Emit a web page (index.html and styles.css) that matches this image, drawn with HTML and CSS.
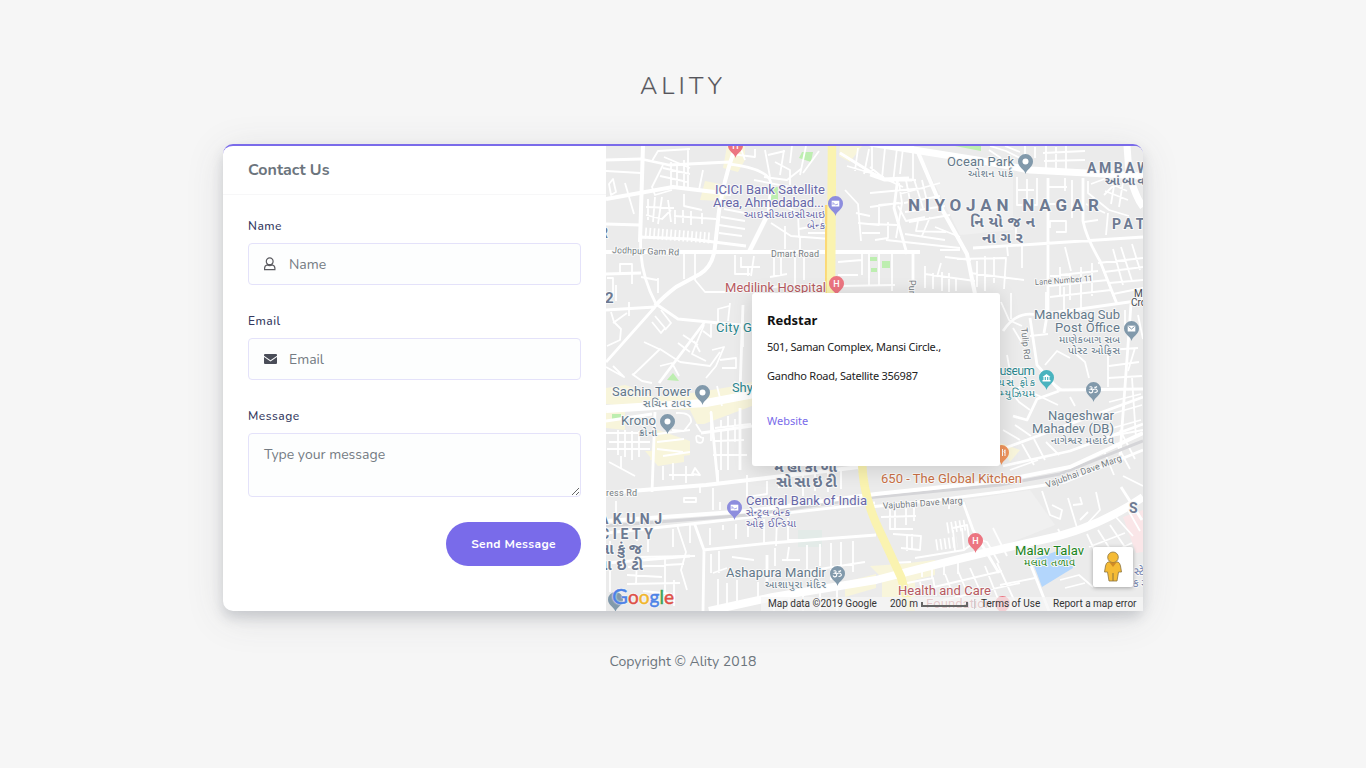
FILE: index.html
```html
<!DOCTYPE html>
<html lang="en">
<head>
<meta charset="utf-8">
<title>Ality - Contact</title>
<link rel="stylesheet" href="styles.css">
</head>
<body>
<main class="page">
  <h1 class="brand">ALITY</h1>
  <section class="card">
    <div class="form-col">
      <h2 class="card-title">Contact Us</h2>
      <form class="form">
        <label class="label" for="name">Name</label>
        <div class="field">
          <svg class="icon" viewBox="0 0 14 16"><path d="M6.700 1.900a3.400 3.400 0 1 0 0 6.800 3.400 3.400 0 0 0 0-6.800ZM4 9C2.400 9.400 1.600 10.600 1.600 12.200V13.700H11.900V12.200C11.900 10.600 11 9.400 9.400 9Q6.700 10.500 4 9Z" fill="none" stroke="#5b5b60" stroke-width="1.200"/></svg>
          <input class="input" id="name" placeholder="Name">
        </div>
        <label class="label" for="email">Email</label>
        <div class="field">
          <svg class="icon" viewBox="0 0 14 16"><path d="M2 3H13Q14 3 14 4V4.800L7.500 9.300L1 4.800V4Q1 3 2 3ZM1 6L7.500 10.500L14 6V12Q14 13 13 13H2Q1 13 1 12Z" fill="#4a4d58"/></svg>
          <input class="input" id="email" placeholder="Email">
        </div>
        <label class="label" for="message">Message</label>
        <textarea class="textarea" id="message" placeholder="Type your message"></textarea>
        <button class="send" type="button">Send Message</button>
      </form>
    </div>
    <div class="map">
      <svg class="map-art" viewBox="606 146 537 465">
        <defs>
          <g id="pin"><path d="M0 12C-1 7-7.500 5.500-7.500-.5A7.500 7.500 0 0 1 7.500-.5C7.500 5.500 1 7 0 12Z"/></g>
          <g id="om" fill="none" stroke="#fff" stroke-width="1.100"><path d="M-4-3Q-1-4-1.500-1.500L-3-.8Q0-.5-1 2-3 4-4.500 1.500M-1 0Q2-2 3.500 0T1 2.500M1-3Q2-2 3.500-3.500"/></g>
          <g id="mail"><rect x="-3.800" y="-3.300" width="7.600" height="5.800" fill="#fff"/></g>
        </defs>
        <rect x="606" y="146" width="537" height="465" fill="#ebebeb"/>
        <path fill="#f0f0f0" d="M918 150L990 166 1013 176V230L960 235ZM965 500L1030 490 1055 525 980 555Z"/>
        <g class="yellow-area">
          <path d="M727 146H745V160L738 172 723 168ZM705 181L730 186 724 201 700 200ZM840 146H862L850 162 839 156ZM606 388L625 385 640 390 655 397 700 392 735 386 752 382V406L704 424H697L690 410 640 408 606 404ZM655 429L690 441V455L650 460ZM606 412H625V430L606 428ZM645 451H684V462L658 466ZM870 566L900 564 935 560V575L915 580V597H882V578ZM845 582L876 574V588L845 597ZM1000 443L1020 450 1010 462Z"/>
        </g>
        <path fill="#bdeeb0" d="M802 152H813L811 162 799 158ZM771 187H778V200H771ZM667 380L673 373 679 381ZM612 414H621V420H612ZM870 257H877V261H870ZM882 261H890V268H882ZM871 268H877V272H871ZM955 146H981V151Z"/>
        <path fill="#fae6e8" d="M1123 517L1143 510V552L1136 553Z"/>
        <path fill="#e3ebe8" d="M798 530H822V547H798Z"/>

        <g class="road minor">
          <path d="M606 171L641 173M609 184L613 179 616 192 611 195ZM625 183L634 214M652 161L658 151 690 149M663 165L652 187 655 195 672 190M664 157L690 168M660 176L688 182M671 162V188M677 164V188M684 160V189M688 148V187M663 168L690 174M648 199V220M655 197L653 222M662 197L658 224M646 207L674 208M646 215L662 219 671 210M668 200L671 222M684 194V206L702 210M703 170L699 190M620 275V264H632V284M616 285V301M607 278H613V297M684 254V279M695 254V280L705 292H725M658 278V293M641 277L657 280M674 216L716 219M675 210V224M683 210V223M691 211V225M702 213V224"/>
          <path d="M731 154L755 157V149M741 149L745 160M765 150L770 177M768 155L785 151M724 209L750 214M721 217L745 221M719 225L745 229M719 233L742 236M764 177L787 180 801 169M775 162L790 170V185M784 150L780 175M792 146L790 163M806 146L800 175M819 151L803 173M754 180L790 187M779 203L798 213 799 238M771 223L791 236 830 239M785 226V249M799 229L821 225V218M800 237V250M808 233H830M774 258V277M770 277L787 274M781 258V276M795 254V285M754 256L751 276M804 256V280M735 255V274H750M741 257V267H760M748 268V276M758 290L780 286 831 285"/>
          <path d="M840 153L868 171 903 187M847 166L884 177M858 148L855 171M869 149L864 174M872 171L872 145M845 190L858 204 861 241M856 213L870 216M858 223L879 225V205L902 203M862 233H880M862 251V275M869 253V286M879 254V285M892 254V291M838 262L862 260M838 275L858 275M840 286L895 285M875 240L888 238V222M885 148L882 178M897 148L893 183M903 148L900 174M913 146V181M870 167L886 180H916M870 193L925 188M870 207L899 203M870 224L897 225M898 206L906 221 925 217M899 183L902 203 896 238M906 180L912 211M914 179L923 208M922 180L929 210M900 194L940 183M904 203L940 196M905 212L945 206M909 222L950 215M918 221L916 231 946 232M905 234L945 240M930 217L922 236M886 240L960 248M935 227L960 237M940 250H960M941 263L937 277M945 257L971 260M925 274L975 281M925 266V288M933 273V289M942 272V291M949 273V292M956 279V291"/>
          <path d="M990 146L1006 151 1020 158M989 150L1001 158M1005 146L1020 152M1025 146V157M1035 147V158M1046 146V168M1056 147V169M1066 146V171M1043 153L1085 151M1044 161L1085 160M1017 177V205H1037V178M1018 190H1034M1027 179V205M1016 225V239M1065 178V191M1050 228V221H1066V232H1056M1048 187H1067M1072 180V218M1048 204H1064M957 259L1006 258 1004 289M985 256V291M977 261V287M994 257V283M1022 246V268M1007 246L1008 256M970 273L1024 280M1065 247L1071 271M1050 276L1098 271M1049 286L1108 280M1050 297L1111 290M1060 267V296M1070 273V300M1081 267V298M1092 263V296M1103 269L1115 300M1113 249L1123 285M1121 247L1132 281M1132 244L1140 270M1098 263L1143 258M1104 272L1143 267M1109 283L1143 280M1113 294L1143 288M1088 181V193L1109 210 1129 216M1091 184L1107 178 1116 183 1104 195M1110 183L1127 191M1105 191L1128 200M1115 180L1111 204M1123 182L1119 207M1086 204L1105 213M1084 222L1098 220M1108 213L1106 235"/>
          <path d="M611 312L614 322 621 329 620 340 607 346M629 302V316M627 313L613 323M655 316L665 328 661 333 652 322M661 310L671 323 665 330M704 325L692 354 706 361M683 335L698 345M678 343L690 352M644 342L659 349M633 375L660 349 680 362M632 374L642 381 652 383M606 367L624 377 613 366M660 366L672 363 679 376M680 362L710 366 720 352M703 331L711 337V324M718 324V309L729 306M730 303L728 321M743 305V347M694 341L700 352M712 350L724 347 716 366 706 378M720 360L736 358V368H722M734 382L741 384M717 386L722 406M606 433H653M609 442H650M618 430V455M625 430V457M632 431V460M639 431V457M607 449H650M676 413Q692 412 691 422L684 431 672 430M657 434L690 430M657 442L684 439M657 449L683 452M663 456L690 452M696 424L701 432M702 438Q694 432 697 442 704 445 703 437M711 411V441M721 420V470M728 416V470M715 428L751 424M714 441L744 440M713 455H747M735 419V442M609 462L635 476M621 456V468M663 466V480M673 463V480M686 466V483M669 475H694M695 468L700 475 692 474ZM718 470V484"/>
          <path d="M616 501V521M684 502H696V498H684ZM700 486V493M713 488V510M720 502V510M610 541V554M637 533V541M648 533V552M673 529V547M690 525V543M677 525L686 552 681 570 687 590M710 528V545M723 525V530M736 524V539M748 522V537M764 519V544M777 518L776 546M788 518V540H802M637 557L695 556M628 567L684 564M637 557L636 585M665 559V603M674 580V606M627 575L662 577M627 584L680 583M643 591L672 594M610 568V592M711 554V573M719 551V573M732 557L754 560M713 573L727 568M775 548V566M789 547L787 561M807 545V575M820 544V566M831 543V580M841 542V566M853 541V572M782 560H800M800 572L865 562M718 579V608M727 583V610M737 580V606M758 582V600M774 598V611M789 596V611M803 594V611M820 591V611M837 588V611M747 475V497L767 494V481M779 475V488M803 472V496M815 470V491M828 469V492M841 468V489"/>
          <path d="M1001 302L1009 320 1022 326M1011 293V319M1013 328L1025 348M1030 336L1048 334M1045 365L1057 351 1070 358M1070 349L1085 362 1089 378M1026 382L1012 393 1019 402 1030 410M1035 394L1058 405M1070 397L1075 406M1040 373L1062 390M1108 350L1138 348M1109 366L1139 362M1108 378L1142 376M1109 402L1141 394M1108 415L1142 405M1109 429L1141 420M1106 437L1143 430M1135 348L1128 371M1132 378L1136 438M1108 349V387M1125 310V330M1138 315L1143 339M1046 292V314M1064 287V312M1081 285V311M1003 430L1020 440M1015 425L1031 436M1007 355L1012 382M1010 470L1038 460M1022 444L1034 465M1034 439L1045 460M1046 442L1059 455M1104 451L1114 475M1116 443L1130 469M1120 430L1135 459M1042 491L1050 515 1060 519 1062 510 1052 505M1068 498L1078 531M1080 497L1082 504 1073 505M1086 525L1100 510 1096 492M1080 520L1088 512M1123 476L1143 486"/>
          <path d="M890 505L890 529H913M881 517L916 516M895 507V528M906 506V525M914 503V521M893 534L921 536 920 550 901 548M907 536V551M912 534V549M949 499V509M953 528L967 525 969 537M953 530L955 551M962 528L964 549M969 536L987 542 999 563M993 528L1007 556M976 541L964 550 915 558M891 563L911 562M922 566V577M932 563V579M944 560V575M958 559V574M907 583L933 578 936 596M920 582L923 596M945 574L952 592M958 571L967 592M970 568L981 593M985 566L998 599M997 563L1015 602M930 588L1002 571M943 600L1020 583M1000 585L1035 578M1087 534L1105 573M1098 530L1117 560M1110 525L1127 550M1089 547L1125 533M1095 560L1132 543M1115 516L1133 536M1127 508L1140 531M1058 529L1062 537M1060 580L1079 575 1093 587M1065 588L1085 583"/>
        </g>
        <g fill="none" stroke="#fff" stroke-dasharray="1.700 2.500">
          <path stroke-width="11" d="M645 233L710 238M936 545L957 542M947 528L966 525"/>
        </g>
        <g class="road mid">
          <path d="M641 235Q638 270 656 304M606 160L641 159 669 165 729 162M606 224L640 225M640 237L690 239 746 246M606 274L641 273M729 164Q770 169 771 184L768 214M840 153L882 179 909 178M870 175L884 180H912M1048 178V310L1044 333M973 248L1037 244 1143 237M898 177L894 208 907 254M913 252V293M1083 178V221Q1086 237 1100 261L1117 304M1131 304L1120 455M656 304L678 319 750 326M606 310L655 307L606 362M704 323L659 383M743 305L740 391M606 421L652 414M655 412L652 492M711 412L718 485M740 408V470M701 433L752 426M1003 331Q1017 310 1037 315L1080 309 1143 300M1030 318L1037 365 1059 390M1059 390L1143 389M1059 391L1037 399 1027 420 1013 416M1005 448L1143 397M1003 466L1070 451 1143 424M606 533L709 522 875 503M695 525L704 550 703 611M703 550L770 543 876 535M767 555V582M606 563L690 556M963 502L973 530 999 573M1121 487L1142 520M870 507L937 500 1000 492 1065 482 1143 450M1030 563L1049 611"/>
          <path d="M768 214L749 252" stroke-width="4.500"/>
          <path d="M643 146L640 242" stroke-width="4"/>
        </g>
        <path fill="#b3d6fc" d="M1032 560L1060 550 1070 555 1073 568 1042 587Z"/>
        <g fill="none" stroke="#d5d5d8" stroke-width="3"><path d="M606 526L749 515 866 498 1000 485 1060 474 1143 441"/></g>
        <g class="road major">
          <path d="M733 154Q724 180 719 211L715 247Q713 266 700 274L676 287Q663 297 655 306M606 199L673 187 731 194M606 252L920 252" stroke-width="4"/>
          <path d="M606 493L706 485 766 478 859 467 866 480M606 521L749 511 876 494 1000 481 1070 467 1143 433" stroke-width="4"/>
          <path d="M606 409L655 406 706 403 754 394M709 611L773 597 876 580Q980 553 1037 541 1095 530 1143 497" stroke-width="8"/>
          <path d="M870 143L977 160 1030 170 1143 176M1127 146L1129 173Q1135 196 1143 207" stroke-width="7"/>
          <path d="M917 150L943 211 967 254 975 294" stroke-width="4"/>
        </g>
        <g fill="none" stroke="#fbd976" stroke-width="10"><path d="M830 205V293"/></g>
        <g fill="none" stroke="#faf3b0" stroke-width="8.500" stroke-linejoin="round"><path d="M832 146L831 293M862 462Q863 493 876 523L901 577 911 613"/></g>

        <g class="poi">
          <text x="947" y="166" textLength="67" class="slate">Ocean Park</text>
          <text x="968" y="177" textLength="45" class="slate guj">ઓશન પાર્ક</text>
          <text x="715" y="194" textLength="110" class="violet">ICICI Bank Satellite</text>
          <text x="713" y="207" textLength="111" class="violet">Area, Ahmedabad...</text>
          <text x="744" y="218" textLength="81" class="violet guj">આઇસીઆઇસીઆઇ</text>
          <text x="807" y="229" textLength="18" class="violet guj">બેન્ક</text>
          <text x="725" y="292" textLength="101" class="red">Medilink Hospital</text>
          <text x="716" y="332" textLength="55" class="teal">City Gold</text>
          <text x="732" y="392" textLength="49" class="teal">Shyamal</text>
          <text x="612" y="396" textLength="79" class="slate">Sachin Tower</text>
          <text x="643" y="407" textLength="48" class="slate guj">સચિન ટાવર</text>
          <text x="621" y="425" textLength="35" class="slate">Krono</text>
          <text x="639" y="436" textLength="18" class="slate guj">ક્રોનો</text>
          <text x="1034" y="319" textLength="86" class="slate">Manekbag Sub</text>
          <text x="1055" y="332" textLength="65" class="slate">Post Office</text>
          <text x="1059" y="343" textLength="61" class="slate guj">માણેકબાગ સબ</text>
          <text x="1068" y="354" textLength="52" class="slate guj">પોસ્ટ ઓફિસ</text>
          <text x="989" y="375" textLength="46" class="teal">Museum</text>
          <text x="989" y="386" textLength="46" class="teal guj">શ્રેયસ ફોક</text>
          <text x="1000" y="397" textLength="35" class="teal guj">મ્યુઝિયમ</text>
          <text x="1048" y="420" textLength="66" class="slate">Nageshwar</text>
          <text x="1032" y="433" textLength="82" class="slate">Mahadev (DB)</text>
          <text x="1051" y="444" textLength="63" class="slate guj">નાગેશ્વર મહાદેવ</text>
          <text x="881" y="483" textLength="141" class="orange">650 - The Global Kitchen</text>
          <text x="746" y="505" textLength="121" class="violet">Central Bank of India</text>
          <text x="746" y="516" textLength="44" class="violet guj">સેન્ટ્રલ બેન્ક</text>
          <text x="746" y="527" textLength="50" class="violet guj">ઓફ ઈન્ડિયા</text>
          <text x="726" y="577" textLength="100" class="slate">Ashapura Mandir</text>
          <text x="765" y="588" textLength="61" class="slate guj">આશાપુરા મંદિર</text>
          <text x="1015" y="555" textLength="69" class="green">Malav Talav</text>
          <text x="1024" y="566" textLength="51" class="green guj">મલાવ તળાવ</text>
          <text x="898" y="595" textLength="93" class="red">Health and Care</text>
          <text x="926" y="608" textLength="66" class="red">Foundation</text>
        </g>
        <g class="district">
          <text x="908" y="211" textLength="191" font-size="17">NIYOJAN NAGAR</text>
          <text x="970" y="227" textLength="65" class="gujb">નિયોજન</text>
          <text x="982" y="243" textLength="41" class="gujb">નાગર</text>
          <text x="1087" y="173" textLength="74" font-size="14">AMBAWA</text>
          <text x="1105" y="185" textLength="55" font-size="12">આંબાવાડી</text>
          <text x="1112" y="229" textLength="44" font-size="14">PATE</text>
          <text x="774" y="472" textLength="63" class="gujb">મહાકાળી</text>
          <text x="776" y="487" textLength="61" class="gujb">સોસાઇટી</text>
          <text x="599" y="524" textLength="63" font-size="14">AKUNJ</text>
          <text x="600" y="539" textLength="53" font-size="14">CIETY</text>
          <text x="598" y="554" textLength="44" class="gujb">સાકુંજ</text>
          <text x="596" y="570" textLength="47" class="gujb">સાઇટી</text>
          <text x="1129" y="513" textLength="28" font-size="14">S A</text>
          <text x="599" y="238" font-size="14">R</text>
          <text x="605" y="303" font-size="15">2</text>
        </g>
        <g class="street">
          <text x="612" y="253" textLength="67" transform="rotate(2 612 253)">Jodhpur Gam Rd</text>
          <text x="771" y="257" textLength="48">Dmart Road</text>
          <text x="1035" y="285" textLength="58" transform="rotate(-4 1035 285)" class="lane">Lane Number 11</text>
          <text x="606" y="496" textLength="31">ress Rd</text>
          <text x="883" y="509" textLength="80" transform="rotate(-4 883 509)">Vajubhai Dave Marg</text>
          <text x="1047" y="488" textLength="80" transform="rotate(-20 1047 488)">Vajubhai Dave Marg</text>
          <text x="1021" y="328" textLength="32" transform="rotate(84 1021 328)">Tulip Rd</text>
          <text x="909" y="280" transform="rotate(90 909 280)">Pur</text>
          <text x="1134" y="297" class="dark">M</text><text x="1131" y="306" class="dark">Cro</text>
          <text x="1134" y="575" class="big">સ્ટે</text><text x="1133" y="587" class="big">ક સ</text>
        </g>

        <g fill="#8199ab">
          <g transform="translate(1025.500 162)"><use href="#pin"/><circle r="3" cy="-.5" fill="#fff"/></g>
          <g transform="translate(702.500 393)"><use href="#pin"/><circle r="3" cy="-.5" fill="#fff"/></g>
          <g transform="translate(667.500 422)"><use href="#pin"/><circle r="3" cy="-.5" fill="#fff"/></g>
          <g transform="translate(1131.500 329)"><use href="#pin"/><use href="#mail"/><path d="M-3-2.500L0 0 3-2.500" fill="none" stroke="#8199ab"/></g>
          <g transform="translate(1093.500 390)"><use href="#pin"/><use href="#om"/></g>
          <g transform="translate(837.500 574)"><use href="#pin"/><use href="#om"/></g>
          <g transform="translate(615.500 600)"><use href="#pin"/></g>
        </g>
        <g fill="#8d8dde">
          <g transform="translate(835.500 204)"><use href="#pin"/><use href="#mail"/><path d="M-2.500 1V-1.500L0 1 2.500 0" fill="none" stroke="#8d8dde" stroke-width=".8"/></g>
          <g transform="translate(734.500 508)"><use href="#pin"/><use href="#mail"/><path d="M-2.500 1V-1.500L0 1 2.500 0" fill="none" stroke="#8d8dde" stroke-width=".8"/></g>
        </g>
        <g fill="#ec7581" class="hospital">
          <g transform="translate(735.500 146)"><use href="#pin"/><text y="3">H</text></g>
          <g transform="translate(836.500 284)"><use href="#pin"/><text y="3">H</text></g>
          <g transform="translate(975.500 541)"><use href="#pin"/><text y="3">H</text></g>
          <g transform="translate(1002.500 604)"><use href="#pin"/></g>
        </g>
        <g transform="translate(1046.500 378)" fill="#49b3bf"><use href="#pin"/><path d="M-4-1L0-4 4-1ZM-4 2H4V3.500H-4ZM-3-1H-1.800V2H-3ZM-.6-1H.6V2H-.6ZM1.800-1H3V2H1.800Z" fill="#fff"/></g>
        <g transform="translate(1001.500 453)" fill="#f0945c"><use href="#pin"/><path d="M1-4V3M3.500-3.500V3M3.500-3Q1.500-1 3.500 0" fill="none" stroke="#fff"/></g>
      </svg>
      <div class="google"><span class="b big-g">G</span><span class="r">o</span><span class="y">o</span><span class="b">g</span><span class="g">l</span><span class="r">e</span></div>
      <div class="pegman">
        <svg width="18" height="32" viewBox="0 0 18 32"><g fill="#f5bb35" stroke="#8c7440" stroke-width=".8"><path d="M4 11H14Q16 12 16.500 15L17.500 21 14.500 21 13 30H5L3.500 21 .5 21 1.500 15Q2 12 4 11Z"/><circle cx="9" cy="6.300" r="5.300"/></g><path d="M5.500 11.500H12.500L9 16Z" fill="#d08a26"/><path d="M9 22V30" stroke="#8c7440" stroke-width="1"/></svg>
      </div>
      <div class="credits">
        <span class="credit c1">Map data ©2019 Google</span>
        <span class="credit c2">200 m</span><i class="scale"></i>
        <i class="divider"></i>
        <span class="credit c3">Terms of Use</span>
        <span class="credit c4">Report a map error</span>
      </div>
      <div class="info">
        <h3 class="info-title">Redstar</h3>
        <p class="info-line l1">501, Saman Complex, Mansi Circle.,</p>
        <p class="info-line l2">Gandho Road, Satellite 356987</p>
        <a class="info-link">Website</a>
      </div>
    </div>
  </section>
  <footer class="footer">Copyright © Ality 2018</footer>
</main>
</body>
</html>
```
FILE: styles.css
```css
* { box-sizing: border-box; }
body { margin: 0; background: #f6f6f6; font-family: Nunito, Lato, "Open Sans", sans-serif; color: #6c757d; }
.page { display: flex; flex-direction: column; align-items: center; height: 768px; overflow: hidden; }
.brand { margin: 70px 0 0; height: 74px; font-size: 24px; line-height: 32px; font-weight: 300; letter-spacing: 4.3px; color: #55555b; -webkit-text-stroke: .2px #55555b; }
.card { display: flex; width: 920px; height: 467px; background: #fff; border-top: 2px solid #7a6bea; border-radius: 10px; box-shadow: 0 7px 12px rgba(60,70,90,.18), 0 7px 38px rgba(70,70,80,.13); }
.form-col { width: 383px; }
.card-title { margin: 0; height: 49px; padding-left: 25px; border-bottom: 1px solid #f7f7f8; font-size: 16px; line-height: 48px; font-weight: 700; }
.form { display: flex; flex-direction: column; padding: 19px 25px 0; }
.label { font-size: 12px; line-height: 24px; letter-spacing: .5px; color: #34395e; margin-bottom: 5px; font-weight: 500; }
.field { display: flex; align-items: center; height: 42px; border: 1px solid #e4e2fa; border-radius: 4px; background: #fdfefe; margin-bottom: 24px; padding-left: 14px; }
.icon { width: 14px; height: 16px; flex: none; overflow: visible; }
.input { flex: 1; min-width: 0; border: 0; background: none; outline: 0; padding: 0 0 0 12px; font: 14px Nunito, Lato, sans-serif; }
.input::placeholder, .textarea::placeholder { color: #747b83; opacity: 1; }
.textarea { display: block; height: 64px; border: 1px solid #e4e2fa; border-radius: 4px; background: #fdfefe; padding: 10px 15px; font: 14px/21px Nunito, Lato, sans-serif; resize: vertical; overflow: hidden; outline: 0; }
.send { align-self: flex-end; width: 135px; height: 44px; margin-top: 25px; border: 0; border-radius: 22px; background: #796bea; color: #fff; font: 700 12px Nunito, Lato, sans-serif; letter-spacing: .35px; padding: 0; }
.map { position: relative; width: 537px; height: 465px; overflow: hidden; }
.map-art { display: block; width: 537px; height: 465px; border-top-right-radius: 8px; }
.yellow-area { fill: #f8f5db; }
.road { fill: none; stroke: #fff; stroke-linejoin: round; }
.minor { stroke-width: 1.8; }
.mid { stroke-width: 2.8; }
.poi { font: 13px Roboto, "Noto Sans Gujarati", sans-serif; }
.poi text, .district text, .street text { paint-order: stroke; stroke: #f8f8f8; stroke-width: 2px; stroke-linejoin: round; }
.poi .guj { font-size: 10.5px; }
.slate { fill: #64798a; }
.violet { fill: #6767a8; }
.red { fill: #b75a61; }
.teal { fill: #2a868e; }
.orange { fill: #c97045; }
.green { fill: #1c8420; }
.district { font-family: Roboto, "Noto Sans Gujarati", sans-serif; font-weight: 700; fill: #6d7a92; }
.gujb { font-size: 15px; }
.street { font: 9px Roboto, "Noto Sans Gujarati", sans-serif; fill: #757b80; }
.street .lane { font-size: 8px; }
.street .dark { fill: #44494e; font-size: 10px; }
.street .big { font-size: 11px; fill: #6f7fae; }
.hospital text { fill: #fff; font: 500 9px Roboto, sans-serif; text-anchor: middle; }
.google { position: absolute; left: 6px; bottom: 2px; font: 19px/24px Lato, sans-serif; letter-spacing: 0; -webkit-text-stroke: .5px currentColor; text-shadow: 0 0 2px #fff, 0 0 2px #fff; }
.big-g { font-size: 22px; }
.google .b { color: #4d82e6; } .google .r { color: #dd4f46; } .google .y { color: #f0b52c; } .google .g { color: #3aa356; }
.pegman { position: absolute; left: 487px; top: 401px; width: 40px; height: 40px; display: flex; align-items: center; justify-content: center; background: #fff; border-radius: 2px; box-shadow: 0 1px 4px rgba(0,0,0,.3); }
.credits { position: absolute; right: 0; bottom: 0; width: 382px; height: 14px; display: flex; align-items: center; background: rgba(245,245,245,.72); padding: 0 6px 0 7px; font: 10px/14px Roboto, sans-serif; color: #333; white-space: nowrap; }
.credit { flex: none; }
.c1 { width: 122px; } .c2 { width: 31px; }
.scale { width: 47px; height: 5px; border: 2px solid #666; border-top: 0; }
.divider { width: 1px; height: 10px; background: #ccc; margin: 0 6px 0 6px; }
.c3 { width: 72px; }
.info { position: absolute; left: 146px; top: 147px; width: 248px; height: 173px; background: #fff; border-radius: 3px; padding: 17px 15px 0; color: #222; box-shadow: 0 3px 20px rgba(0,0,0,.14); font-family: "Noto Sans", sans-serif; font-size: 11px; }
.info-title { margin: 0; font-size: 13px; line-height: 21px; color: #111; }
.info-line { margin: 0; line-height: 29px; letter-spacing: -.25px; }
.l1 { margin-top: 1px; }
.info-link { display: block; margin-top: 16px; line-height: 29px; color: #796bea; }
.footer { margin-top: 40px; font-size: 14px; line-height: 21px; }
```
